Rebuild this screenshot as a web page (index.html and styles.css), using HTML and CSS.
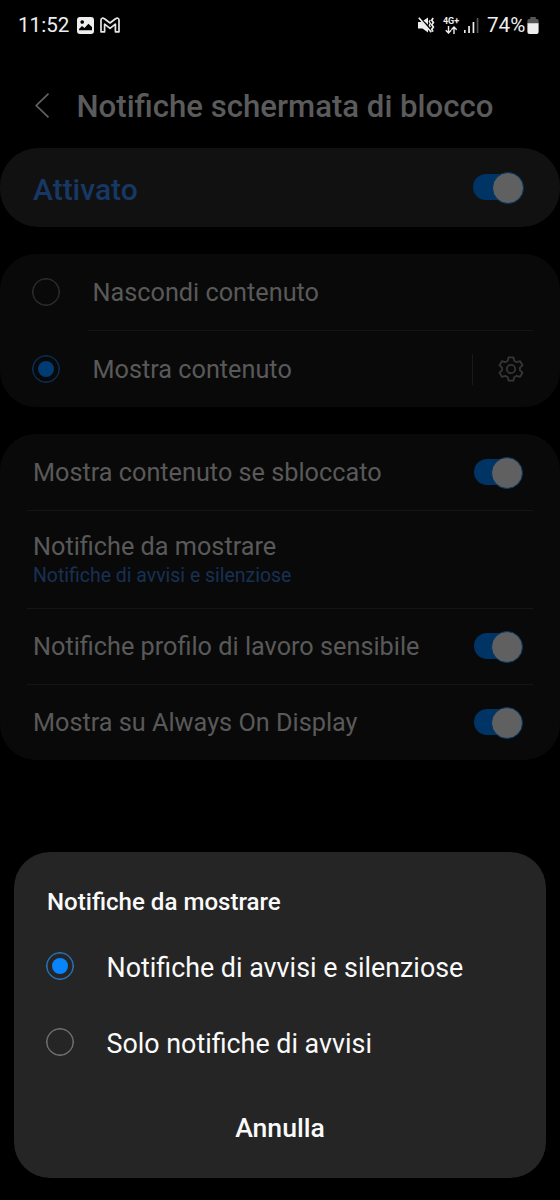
FILE: index.html
```html
<!DOCTYPE html>
<html lang="it">
<head>
<meta charset="utf-8">
<title>Notifiche schermata di blocco</title>
<link rel="stylesheet" href="styles.css">
</head>
<body>
<div class="screen">
  <div class="status">
    <span class="time">11:52</span>
    <svg class="ic-photo" width="17" height="17" viewBox="0 0 17 17"><path fill="#eee" fill-rule="evenodd" d="M3 0h11a3 3 0 0 1 3 3v11a3 3 0 0 1-3 3H3a3 3 0 0 1-3-3V3a3 3 0 0 1 3-3zM2 13.200h13V10l-3.600-3.200L7.500 11 5 9 2 12zM5.200 3.200a1.800 1.800 0 1 0 .01 0z"/></svg>
    <svg class="ic-mail" width="20" height="16" viewBox="0 0 20 16"><path fill="none" stroke="#e6e6e6" stroke-width="1.700" stroke-linejoin="round" d="M1 14.800V3C1 1 3 .6 4.500 1.800L10 6l5.500-4.200C17 .6 19 1 19 3v11.800h-3.600V7.200L10 11.400 4.600 7.200v7.600z"/></svg>
    <span class="spacer"></span>
    <svg class="ic-mute" width="17" height="16" viewBox="0 0 17 16"><path fill="#eee" d="M0 5h3.500L10 11v4.500L4.500 11.500H0zM5.500 3.600L10 .5v7.300z"/><path fill="none" stroke="#eee" stroke-width="1.700" d="M.8.8l12.500 14.400M15.200 1l-1.500 2.200 1.700 2.300-1.700 2.300 1.700 2.300-1.700 2.300 1.400 2.200"/><path fill="none" stroke="#eee" stroke-width="1.300" d="M12.200 3l-.9 1.500 1.100 1.900-1.100 1.900 1.100 1.800"/></svg>
    <span class="net"><span class="net-label">4G+</span><svg width="13" height="8" viewBox="0 0 13 8"><path fill="none" stroke="#eee" stroke-width="1.400" d="M3.500 0v6.800M.8 4.200l2.700 2.700 2.700-2.700M9 8V1.200M6.300 3.800L9 1.100l2.700 2.700"/></svg></span>
    <svg class="ic-signal" width="15" height="16" viewBox="0 0 15 16"><path fill="#eee" d="M0 13h1.600v3H0zM4.200 9h1.700v7H4.200zM8.600 5h1.700v11H8.600z"/><path fill="#555" d="M12.700 1h1.700v15h-1.700z"/></svg>
    <span class="pct">74%</span>
    <svg class="ic-batt" width="12" height="17" viewBox="0 0 12 17"><path fill="#555" d="M3.200 0h5.600v2H10a1.600 1.600 0 0 1 1.600 1.600V7H.4V3.600A1.600 1.600 0 0 1 2 2h1.200z"/><path fill="#eee" d="M.4 6.200h11.200V15a2 2 0 0 1-2 2H2.400a2 2 0 0 1-2-2z"/></svg>
  </div>
  <header class="header">
    <svg width="16" height="26" viewBox="0 0 16 26"><path fill="none" stroke="#626262" stroke-width="1.700" d="M14.500 .7L2.300 12.500l12.200 11.800"/></svg>
    <h1 class="title">Notifiche schermata di blocco</h1>
  </header>
  <section class="card master">
    <span class="master-label">Attivato</span><span class="switch wide"></span>
  </section>
  <section class="card choices">
    <div class="choice"><span class="radio"></span><span class="label">Nascondi contenuto</span></div>
    <div class="line inset"></div>
    <div class="choice"><span class="radio on"></span><span class="label">Mostra contenuto</span><span class="sep"></span>
      <svg width="26" height="26" viewBox="0 0 26 26"><g fill="none" stroke="#363636" stroke-width="1.800" stroke-linejoin="round"><path d="M10.600 1.300h4.800l.8 3.500 2.500 1.400 3.400-1 2.400 4.100-2.600 2.400v2.600l2.600 2.400-2.400 4.100-3.400-1-2.500 1.400-.8 3.500h-4.800l-.8-3.500-2.500-1.400-3.400 1-2.400-4.100 2.600-2.400v-2.600L1.500 9.300l2.400-4.100 3.400 1 2.500-1.400z"/><circle cx="13" cy="13" r="4.200"/></g></svg>
    </div>
  </section>
  <section class="card options">
    <div class="row"><span class="label unlocked">Mostra contenuto se sbloccato</span><span class="switch"></span></div>
    <div class="line"></div>
    <div class="row tall"><div class="stack"><span class="label">Notifiche da mostrare</span><span class="sub">Notifiche di avvisi e silenziose</span></div></div>
    <div class="line"></div>
    <div class="row"><span class="label">Notifiche profilo di lavoro sensibile</span><span class="switch"></span></div>
    <div class="line"></div>
    <div class="row"><span class="label">Mostra su Always On Display</span><span class="switch"></span></div>
  </section>
  <section class="dialog">
    <h2 class="dialog-title">Notifiche da mostrare</h2>
    <div class="pick"><span class="radio on bright"></span><span class="pick-label">Notifiche di avvisi e silenziose</span></div>
    <div class="pick"><span class="radio bright"></span><span class="pick-label">Solo notifiche di avvisi</span></div>
    <div class="cancel">Annulla</div>
  </section>
</div>
</body>
</html>
```
FILE: styles.css
```css
* { box-sizing: border-box; }
body { margin: 0; background: #000; font-family: Roboto, "Liberation Sans", sans-serif; }
.screen { width: 560px; height: 1200px; overflow: hidden; background: #000; display: flex; flex-direction: column; white-space: nowrap; }
.screen svg { flex: none; display: block; }
.status { height: 50px; display: flex; align-items: center; padding: 0 21px 0 18px; color: #eee; }
.time { font-size: 20.6px; width: 59px; }
.ic-mail { margin-left: 6px; }
.spacer { flex: 1; }
.net { display: flex; flex-direction: column; align-items: center; width: 18px; margin-left: 7px; }
.net-label { font-size: 9px; line-height: 9px; font-weight: 700; }
.ic-signal { margin-left: 4px; }
.pct { font-size: 20.6px; width: 40px; margin-left: 8px; }
.header { height: 98px; display: flex; align-items: center; padding: 13px 0 0 34px; }
.title { margin: 0 0 0 26.500px; font-size: 31.15px; font-weight: 500; color: #5b5b5b; padding-top: 1px; }
.card { background: #090909; border-radius: 36px; flex: none; }
.master { height: 79px; background: #111; border-radius: 38px; display: flex; align-items: center; justify-content: space-between; padding: 0 37px 0 33px; }
.master-label { font-size: 30px; font-weight: 500; color: #173864; padding-top: 3px; }
.switch { position: relative; flex: none; width: 48px; height: 26px; margin-bottom: 1px; border-radius: 13px; background: #003465; }
.switch.wide { width: 50px; margin-bottom: 2px; }
.switch::after { content: ""; position: absolute; right: -1px; top: -2px; width: 30px; height: 30px; border-radius: 50%; border: 1px solid #003465; background: #606060; }
.choices { height: 153px; margin-top: 27px; }
.choice { height: 76px; display: flex; align-items: center; padding: 0 36px 0 32px; }
.choice .label { margin-left: 32.500px; flex: 1; }
.label { font-size: 25.25px; line-height: 30px; color: #595959; padding-top: 2px; }
.row + .line ~ .row .label { padding-top: 0; }
.radio { flex: none; width: 28px; height: 28px; border-radius: 50%; border: 1px solid #303030; box-shadow: inset 0 0 0 .5px #303030; display: grid; place-items: center; }
.radio.on { border-color: #07325b; box-shadow: inset 0 0 0 .5px #07325b; }
.radio.on::after { content: ""; width: 16px; height: 16px; border-radius: 50%; background: #003b73; }
.radio.bright { border-color: #777; box-shadow: inset 0 0 0 .5px #777; }
.radio.on.bright { border-color: #267ac5; box-shadow: inset 0 0 0 .5px #267ac5; }
.radio.on.bright::after { background: #0984ff; }
.sep { width: 1px; height: 31px; background: #191919; margin-right: 25px; }
.line { height: 1px; margin: 0 27px; background: #151515; }
.inset { margin-left: 88px; }
.options { height: 326px; margin-top: 27px; }
.row { height: 75px; display: flex; align-items: center; justify-content: space-between; padding: 0 38px 0 33px; }
.row:first-child { height: 76px; }
.row.tall { height: 97px; }
.stack { display: flex; flex-direction: column; }
.sub { font-size: 19.45px; line-height: 24px; color: #173153; margin-top: 2px; }
.dialog { flex: none; width: 532px; height: 326px; margin: 92px 14px 0; border-radius: 36px; background: #252525; color: #fafafa; padding: 36px 33px 0; }
.dialog-title { margin: 0; font-size: 24.1px; line-height: 28px; font-weight: 500; }
.pick { display: flex; align-items: center; height: 76px; margin-left: -1px; }
.pick:first-of-type { margin-top: 12px; }
.pick-label { margin-left: 32.500px; font-size: 26.85px; padding-top: 3px; }
.cancel { font-size: 26.6px; line-height: 32px; font-weight: 500; text-align: center; margin-top: 32px; }
```
